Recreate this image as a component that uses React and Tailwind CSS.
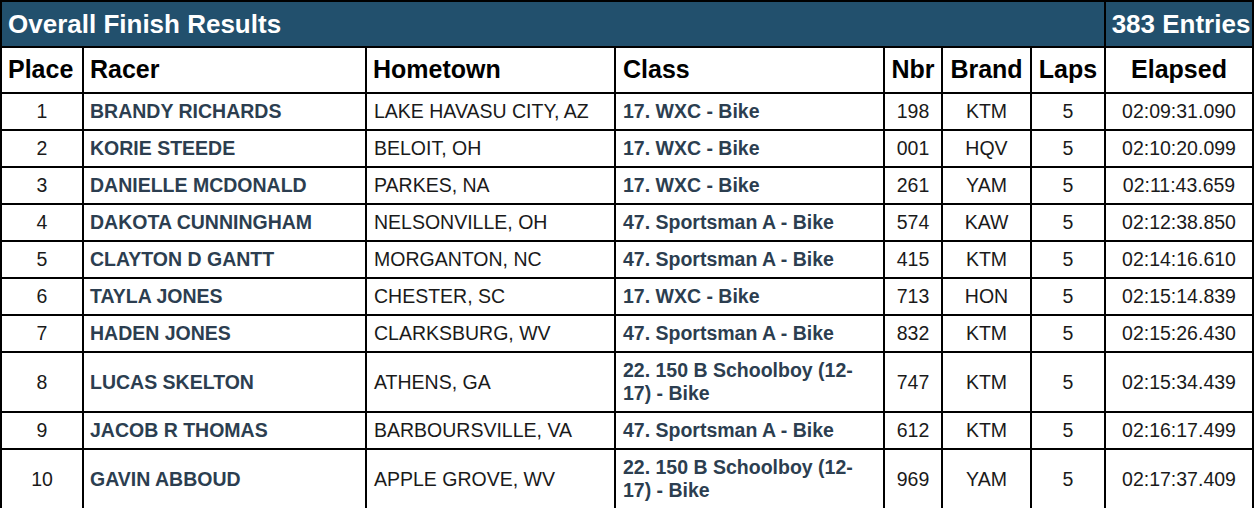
import React from "react";

const rows = [
  ["1", "BRANDY RICHARDS", "LAKE HAVASU CITY, AZ", ["17. WXC - Bike"], "198", "KTM", "5", "02:09:31.090"],
  ["2", "KORIE STEEDE", "BELOIT, OH", ["17. WXC - Bike"], "001", "HQV", "5", "02:10:20.099"],
  ["3", "DANIELLE MCDONALD", "PARKES, NA", ["17. WXC - Bike"], "261", "YAM", "5", "02:11:43.659"],
  ["4", "DAKOTA CUNNINGHAM", "NELSONVILLE, OH", ["47. Sportsman A - Bike"], "574", "KAW", "5", "02:12:38.850"],
  ["5", "CLAYTON D GANTT", "MORGANTON, NC", ["47. Sportsman A - Bike"], "415", "KTM", "5", "02:14:16.610"],
  ["6", "TAYLA JONES", "CHESTER, SC", ["17. WXC - Bike"], "713", "HON", "5", "02:15:14.839"],
  ["7", "HADEN JONES", "CLARKSBURG, WV", ["47. Sportsman A - Bike"], "832", "KTM", "5", "02:15:26.430"],
  ["8", "LUCAS SKELTON", "ATHENS, GA", ["22. 150 B Schoolboy (12-", "17) - Bike"], "747", "KTM", "5", "02:15:34.439"],
  ["9", "JACOB R THOMAS", "BARBOURSVILLE, VA", ["47. Sportsman A - Bike"], "612", "KTM", "5", "02:16:17.499"],
  ["10", "GAVIN ABBOUD", "APPLE GROVE, WV", ["22. 150 B Schoolboy (12-", "17) - Bike"], "969", "YAM", "5", "02:17:37.409"],
];

const base = "bg-white flex items-center py-[6px] leading-[23px] text-[19.5px]";
const cell = `${base} text-[#1a1a1a]`;
const link = `${base} font-bold text-[#2c3e50]`;
const hcell = "bg-white flex items-center h-[44px] text-[25px] font-bold text-black";

export default function App() {
  return (
    <div className="w-[1256px] h-[508px] overflow-hidden bg-white" style={{ fontFamily: '"Liberation Sans", Arial, sans-serif' }}>
      <div className="w-[1254px] bg-black p-[2px] grid grid-cols-[80px_281px_247px_267px_56px_87px_72px_146px] gap-[2px]">
        <div className="col-span-7 bg-[#22506d] h-[44px] flex items-center px-[6px] text-[26px] font-bold text-white">
          Overall Finish Results
        </div>
        <div className="bg-[#22506d] h-[44px] flex items-center justify-center text-[26px] font-bold text-white pl-[4px]">
          383 Entries
        </div>

        <div className={`${hcell} px-[6px]`}>Place</div>
        <div className={`${hcell} px-[6px]`}>Racer</div>
        <div className={`${hcell} px-[6px]`}>Hometown</div>
        <div className={`${hcell} px-[7px]`}>Class</div>
        <div className={`${hcell} justify-center`}>Nbr</div>
        <div className={`${hcell} justify-center`}>Brand</div>
        <div className={`${hcell} justify-center`}>Laps</div>
        <div className={`${hcell} justify-center`}>Elapsed</div>

        {rows.map((r) => (
          <React.Fragment key={r[0]}>
            <div className={`${cell} justify-center`}>{r[0]}</div>
            <div className={`${link} px-[6px]`}>{r[1]}</div>
            <div className={`${cell} px-[7px]`}>{r[2]}</div>
            <div className={`${link} px-[7px]`}>
              <div>
                {r[3].map((l, i) => (
                  <div key={i}>{l}</div>
                ))}
              </div>
            </div>
            <div className={`${cell} justify-center`}>{r[4]}</div>
            <div className={`${cell} justify-center`}>{r[5]}</div>
            <div className={`${cell} justify-center`}>{r[6]}</div>
            <div className={`${cell} justify-center`}>{r[7]}</div>
          </React.Fragment>
        ))}
      </div>
    </div>
  );
}
